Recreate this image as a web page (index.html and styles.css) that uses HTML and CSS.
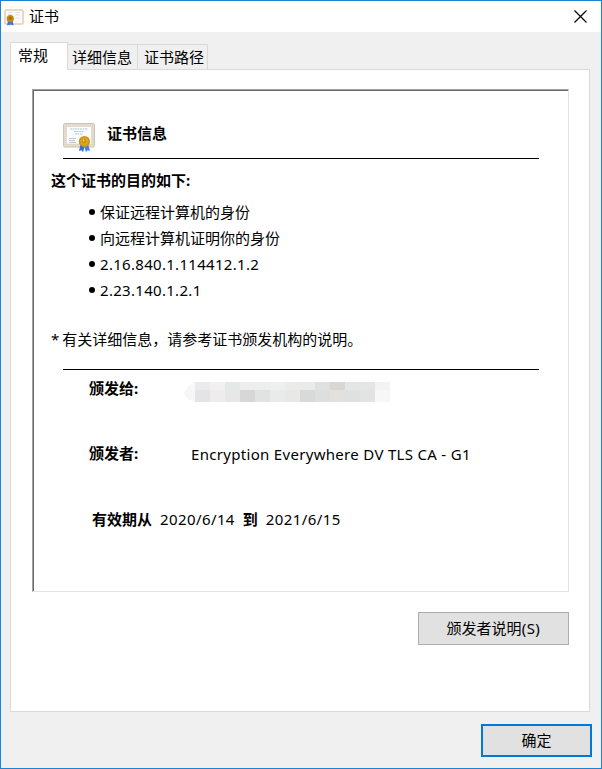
FILE: index.html
```html
<!DOCTYPE html>
<html lang="zh-CN">
<head>
<meta charset="utf-8">
<title>证书</title>
<link rel="stylesheet" href="styles.css">
</head>
<body>
<svg class="defs" width="0" height="0" aria-hidden="true">
  <symbol id="certificate" viewBox="0 0 32 30">
    <rect x="0.5" y="0.5" width="31" height="23.5" rx="1.5" fill="#ded5c4" stroke="#cfc5b3"/>
    <rect x="2" y="2" width="28" height="20.5" fill="none" stroke="#efe8dc" stroke-dasharray="1 1"/>
    <rect x="3.5" y="3.5" width="25" height="17.5" fill="#fbfcfe" stroke="#d8d5d2" stroke-width=".6"/>
    <path d="M7 6h18M11 8.500h10M12 11h8" stroke="#b4c6e0" stroke-width="1" stroke-dasharray="2 .5"/>
    <path d="M6 15.500h7M6 17.500h6M6 19.500h7" stroke="#b8bdc9" stroke-width=".9"/>
    <path d="M17.500 21l-1.500 7 2.500-.8 1.500 2 2-7z" fill="#2f6fe0"/>
    <path d="M25 21l2 7-2.500-.8-1.500 2-2-7z" fill="#3d82ee"/>
    <circle cx="21.400" cy="18.500" r="5.600" fill="#c99216"/>
    <circle cx="21.400" cy="18.500" r="4.200" fill="#dca520"/>
    <circle cx="21" cy="18" r="2.200" fill="#c58c14"/>
    <circle cx="20.700" cy="17.500" r=".9" fill="#f5dc83"/>
  </symbol>
</svg>
<div class="window">
  <header class="titlebar">
    <svg class="titlebar-icon" viewBox="0 0 20 17">
      <rect x="1" y="1" width="18" height="14" rx="1" fill="#fafafa" stroke="#e8cfab" stroke-width="1.600"/>
      <path d="M4 3.500h5M4 5.500h4M11 3.500h5M11 6h5M11 9h5" stroke="#e2e6ec"/>
      <path d="M4 11.500l-1 5 2-.8 1 .8.500-4zM8.500 11.500l1.200 5-2-.8-1 .8-.4-4z" fill="#2f76e6"/>
      <circle cx="6.300" cy="9.700" r="3.600" fill="#c48c0c"/>
      <circle cx="6.300" cy="9.300" r="1.300" fill="#8e6610"/>
    </svg>
    <span class="titlebar-text">证书</span>
    <svg class="close" viewBox="0 0 13 13"><path d="M.5.5l12 12M12.500.5l-12 12" stroke="#000" stroke-width="1.200"/></svg>
  </header>
  <main class="body">
    <nav class="tabs">
      <span class="tab tab-active">常规</span>
      <span class="tab">详细信息</span>
      <span class="tab tab-last">证书路径</span>
    </nav>
    <section class="panel">
      <div class="sheet">
        <div class="heading">
          <svg class="heading-icon"><use href="#certificate"/></svg>
          <strong class="heading-text">证书信息</strong>
        </div>
        <div class="rule"></div>
        <strong class="purpose">这个证书的目的如下:</strong>
        <ul class="purposes">
          <li>保证远程计算机的身份</li>
          <li>向远程计算机证明你的身份</li>
          <li class="oid">2.16.840.1.114412.1.2</li>
          <li class="oid">2.23.140.1.2.1</li>
        </ul>
        <p class="note">* 有关详细信息，请参考证书颁发机构的说明。</p>
        <div class="rule"></div>
        <div class="field">
          <strong class="label">颁发给:</strong>
          <svg class="mosaic" viewBox="0 0 206 20" shape-rendering="crispEdges">
            <path d="M11 0v8H2Q5 1 11 0" fill="#f8f8f8"/><path d="M11 8v12Q3 18 0 11L2 8" fill="#f8f6f4"/>
            <path d="M11 0h15v8H11z" fill="#ebebeb"/><path d="M26 0h15v8H26z" fill="#f3f1ef"/>
            <path d="M41 0h15v8H41z" fill="#e4e8e6"/><path d="M56 0h30v8H56z" fill="#eeeeee"/>
            <path d="M86 0h15v8H86z" fill="#eef0f0"/><path d="M101 0h15v8H101z" fill="#ebebeb"/>
            <path d="M116 0h15v8H116z" fill="#eaeae7"/><path d="M131 0h15v8H131z" fill="#e0e0e0"/>
            <path d="M146 0h15v8H146z" fill="#d9d7d5"/><path d="M161 0h30v8H161z" fill="#e3e6e5"/>
            <path d="M191 0h14l1 1v7H191z" fill="#f3f3f3"/>
            <path d="M11 8h15v12H11z" fill="#e2e4e7"/><path d="M26 8h15v12H26z" fill="#ededed"/>
            <path d="M41 8h15v12H41z" fill="#e7e7e7"/><path d="M56 8h15v12H56z" fill="#d7d7d7"/>
            <path d="M71 8h15v12H71z" fill="#e0e3e1"/><path d="M86 8h15v12H86z" fill="#e8ebea"/>
            <path d="M101 8h15v12H101z" fill="#eae8e6"/><path d="M116 8h15v12H116z" fill="#d7dad8"/>
            <path d="M131 8h15v12H131z" fill="#dcdfde"/><path d="M146 8h15v12H146z" fill="#e3e1de"/>
            <path d="M161 8h15v12H161z" fill="#e0e0e0"/><path d="M176 8h15v12H176z" fill="#e3e3e3"/>
            <path d="M191 8h15v11l-1 1H191z" fill="#f7f7f7"/>
          </svg>
        </div>
        <div class="field">
          <strong class="label">颁发者:</strong>
          <span class="issuer">Encryption Everywhere DV TLS CA - G1</span>
        </div>
        <div class="validity">
          <strong>有效期从</strong><span class="date">2020/6/14</span><strong>到</strong><span class="date">2021/6/15</span>
        </div>
      </div>
      <button class="statement">颁发者说明<span class="accel">(S)</span></button>
    </section>
    <button class="ok">确定</button>
  </main>
</div>
</body>
</html>
```
FILE: styles.css
```css
* { box-sizing: border-box; }

body {
  margin: 0;
  color: #000;
  font: 15px/20px "Noto Sans", "Noto Sans CJK SC", sans-serif;
}

.defs { display: none; }

.window {
  display: flex;
  flex-direction: column;
  width: 602px;
  height: 769px;
  border: 1px solid #1883d7;
  background: #f0f0f0;
}

.titlebar {
  display: flex;
  align-items: center;
  flex: 0 0 31px;
  padding: 0 14px 0 3px;
  background: #fff;
}

.titlebar-icon { width: 20px; height: 17px; margin: 1px 5px 0 0; }
.titlebar-text { flex: 1; padding-bottom: 2px; }
.close { width: 13px; height: 13px; }

.body {
  display: flex;
  flex-direction: column;
  padding: 10px 9px 0;
}

.tabs {
  display: flex;
  align-items: flex-end;
  height: 27px;
}

.tab {
  width: 70px;
  height: 25px;
  padding: 2px 0 0 4px;
  border: solid #d9d9d9;
  border-width: 1px 1px 0 0;
  white-space: nowrap;
}

.tab-last { padding-left: 6px; }

.tab-active {
  z-index: 1;
  width: 58px;
  height: 28px;
  margin-bottom: -1px;
  padding: 2px 0 0 7px;
  border-width: 1px 1px 0 1px;
  background: #fff;
}

.panel {
  display: flex;
  flex-direction: column;
  width: 580px;
  height: 643px;
  padding: 19px 20px 0 21px;
  border: 1px solid #d9d9d9;
  background: #fff;
}

.sheet {
  height: 503px;
  padding: 32px 29px 0 18px;
  border: 1px solid;
  border-color: #a0a0a0 #e3e3e3 #e3e3e3 #a0a0a0;
  box-shadow: inset 1px 1px #696969;
}

.heading {
  display: flex;
  height: 36px;
  padding-left: 12px;
}

.heading-icon { width: 32px; height: 30px; margin: 1px 12px 0 0; }
.heading-text { padding-top: 1px; }

.rule { height: 1px; margin-left: 12px; background: #000; }

.purpose { display: block; margin-top: 11px; }

.purposes {
  margin: 9px 0 0;
  padding: 0;
  list-style: none;
  line-height: 26px;
}

.purposes li {
  display: flex;
  align-items: center;
  padding-left: 38px;
}

.purposes li::before {
  content: "";
  width: 6px;
  height: 6px;
  margin-right: 5px;
  border-radius: 50%;
  background: #000;
}

.oid { letter-spacing: .3px; }

.note {
  margin: 26px 0 20px;
  white-space: nowrap;
  word-spacing: -1px;
}

.field {
  display: flex;
  height: 65px;
  padding: 8px 0 0 38px;
}

.label { width: 95px; }
.mosaic { width: 206px; height: 20px; margin-top: 4px; }

.issuer {
  padding: 1px 0 0 7px;
  letter-spacing: .31px;
  white-space: nowrap;
}

.validity {
  display: flex;
  padding: 9px 0 0 41px;
}

.date { margin: 0 8px; letter-spacing: .4px; }

button {
  padding: 0 0 2px;
  border: 1px solid #adadad;
  background: #e1e1e1;
  color: #000;
  font: inherit;
}

.statement {
  align-self: flex-end;
  width: 151px;
  height: 33px;
  margin-top: 20px;
}

.accel { letter-spacing: .5px; }

.ok {
  align-self: flex-end;
  width: 111px;
  height: 33px;
  margin: 12px 0 0;
  border: 2px solid #0078d7;
}
```
